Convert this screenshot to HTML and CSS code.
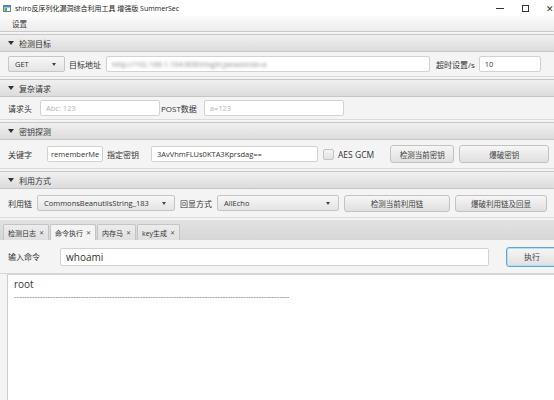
FILE: index.html
```html
<!DOCTYPE html>
<html lang="zh-CN">
<head>
    <meta charset="UTF-8">
    <title>shiro反序列化漏洞综合利用工具 增强版 SummerSec</title>
    <link rel="stylesheet" href="styles.css">
</head>
<body>

    <div class="titlebar">
        <svg class="app-icon" width="8" height="7" viewBox="0 0 8 7">
            <rect x="0.5" y="0.5" width="7" height="6" fill="#fff" stroke="#6b7d8f"/>
            <rect x="1" y="1" width="6" height="1.5" fill="#3a8fd0"/>
            <rect x="1.5" y="3" width="2.5" height="3" fill="#4caf50"/>
        </svg>
        <span class="title">shiro反序列化漏洞综合利用工具 增强版 SummerSec</span>
        <div class="win-controls">
            <span class="ctl-min"></span>
            <span class="ctl-max"></span>
            <span class="ctl-close">✕</span>
        </div>
    </div>

    <div class="menubar"><span>设置</span></div>

    <div class="pane">
        <div class="pane-head"><span class="arrow"></span>检测目标</div>
        <div class="pane-body row-target">
            <div class="combo combo-method">GET<span class="caret"></span></div>
            <label class="lbl lbl-url">目标地址</label>
            <div class="field field-url"><span class="redacted">http://192.168.1.104:8080/login;jsessionid=a</span></div>
            <label class="lbl lbl-timeout">超时设置/s</label>
            <input class="field field-timeout" value="10">
        </div>
    </div>

    <div class="pane">
        <div class="pane-head"><span class="arrow"></span>复杂请求</div>
        <div class="pane-body row-request">
            <label class="lbl">请求头</label>
            <input class="field field-header" placeholder="Abc: 123">
            <label class="lbl lbl-post">POST数据</label>
            <input class="field field-post" placeholder="a=123">
        </div>
    </div>

    <div class="pane">
        <div class="pane-head"><span class="arrow"></span>密钥探测</div>
        <div class="pane-body row-key">
            <label class="lbl">关键字</label>
            <input class="field field-keyword" value="rememberMe">
            <label class="lbl lbl-key">指定密钥</label>
            <input class="field field-key" value="3AvVhmFLUs0KTA3Kprsdag==">
            <span class="checkbox"></span>
            <span class="check-text">AES GCM</span>
            <button class="btn btn-check-key">检测当前密钥</button>
            <button class="btn btn-brute-key">爆破密钥</button>
        </div>
    </div>

    <div class="pane">
        <div class="pane-head"><span class="arrow"></span>利用方式</div>
        <div class="pane-body row-gadget">
            <label class="lbl">利用链</label>
            <div class="combo combo-gadget">CommonsBeanutilsString_183<span class="caret"></span></div>
            <label class="lbl lbl-echo">回显方式</label>
            <div class="combo combo-echo">AllEcho<span class="caret"></span></div>
            <button class="btn btn-check-gadget">检测当前利用链</button>
            <button class="btn btn-brute-gadget">爆破利用链及回显</button>
        </div>
    </div>

    <div class="tabbar">
        <div class="tab">检测日志<span class="tab-x">✕</span></div>
        <div class="tab active">命令执行<span class="tab-x">✕</span></div>
        <div class="tab">内存马<span class="tab-x">✕</span></div>
        <div class="tab">key生成<span class="tab-x">✕</span></div>
    </div>

    <div class="cmd-row">
        <label class="lbl">输入命令</label>
        <input class="field field-cmd" value="whoami">
        <button class="btn btn-exec">执行</button>
    </div>

    <div class="output">
        <div class="out-line">root</div>
        <div class="out-line sep">-----------------------------------------------------------------------------------------------------------</div>
    </div>

</body>
</html>
```

FILE: styles.css
```css
* {
    margin: 0;
    padding: 0;
    box-sizing: border-box;
}

body {
    font-family: "Open Sans", "Noto Sans CJK SC", sans-serif;
    font-size: 8px;
    color: #333;
    background-color: #f4f4f4;
    width: 554px;
    height: 400px;
    overflow: hidden;
}

/* window chrome */
.titlebar {
    height: 16px;
    background-color: #fff;
    display: flex;
    align-items: center;
    padding-left: 3px;
}

.app-icon {
    margin-right: 4px;
}

.title {
    font-size: 7px;
    color: #222;
}

.win-controls {
    margin-left: auto;
    display: flex;
    align-items: center;
    height: 16px;
}

.ctl-min {
    width: 8px;
    height: 1px;
    background-color: #333;
    margin-right: 18px;
}

.ctl-max {
    width: 7px;
    height: 7px;
    border: 1px solid #333;
    margin-right: 17px;
}

.ctl-close {
    font-size: 9px;
    width: 8px;
    overflow: hidden;
    color: #333;
}

.menubar {
    height: 16px;
    background: linear-gradient(#fbfbfb, #ececec);
    border-bottom: 1px solid #c9c9c9;
    display: flex;
    align-items: center;
    padding-left: 12px;
    font-size: 7.5px;
}

/* titled panes */
.pane {
    margin-top: 2px;
    border-bottom: 1px solid #dadada;
}

.pane-head {
    height: 18px;
    background: linear-gradient(#f0f0f0, #dcdcdc);
    border-top: 1px solid #c6c6c6;
    border-bottom: 1px solid #c6c6c6;
    display: flex;
    align-items: center;
    padding-left: 8px;
    color: #333;
}

.arrow {
    width: 0;
    height: 0;
    border-left: 3px solid transparent;
    border-right: 3px solid transparent;
    border-top: 4px solid #333;
    margin-right: 5px;
}

.pane-body {
    display: flex;
    align-items: center;
    padding: 0 6px 0 8px;
    overflow: hidden;
}

.pane-body > *,
.cmd-row > * {
    flex-shrink: 0;
    white-space: nowrap;
}

.row-target {
    height: 24px;
}

.row-request {
    height: 22px;
}

.row-key {
    height: 28px;
}

.row-gadget {
    height: 28px;
}

/* inputs */
.field {
    height: 16px;
    background-color: #fff;
    border: 1px solid #d2d2d2;
    border-radius: 2px;
    font-family: "Open Sans", "Noto Sans CJK SC", sans-serif;
    font-size: 7.5px;
    color: #333;
    padding: 0 5px;
    outline: none;
    display: flex;
    align-items: center;
}

.field::placeholder {
    color: #b4b4b4;
}

.lbl-url {
    margin-left: 4px;
}

.field-url {
    width: 324px;
    margin-left: 5px;
    overflow: hidden;
}

.redacted {
    color: #8a8a8a;
    filter: blur(1.4px);
    white-space: nowrap;
}

.lbl-timeout {
    margin-left: 6px;
}

.field-timeout {
    width: 62px;
    margin-left: 4px;
}

.field-header {
    width: 120px;
    margin-left: 8px;
}

.lbl-post {
    margin-left: 1px;
}

.field-post {
    width: 140px;
    margin-left: 7px;
}

.field-keyword {
    width: 56px;
    margin-left: 15px;
    padding: 0 3px;
    font-size: 7.5px;
}

.lbl-key {
    margin-left: 4px;
}

.field-key {
    width: 167px;
    margin-left: 12px;
}

.checkbox {
    width: 11px;
    height: 11px;
    border: 1px solid #c4c4c4;
    border-radius: 2px;
    background: linear-gradient(#f4f4f4, #e2e2e2);
    margin-left: 5px;
}

.check-text {
    margin-left: 4px;
    font-size: 8.5px;
    color: #333;
}

/* combo boxes */
.combo {
    height: 16px;
    border: 1px solid #c6c6c6;
    border-radius: 2px;
    background: linear-gradient(#f7f7f7, #e4e4e4);
    display: flex;
    align-items: center;
    padding-left: 6px;
    font-size: 7.5px;
    color: #333;
    position: relative;
}

.caret {
    position: absolute;
    right: 8px;
    top: 6px;
    width: 0;
    height: 0;
    border-left: 2.5px solid transparent;
    border-right: 2.5px solid transparent;
    border-top: 3px solid #444;
}

.combo-method {
    width: 57px;
}

.combo-gadget {
    width: 138px;
    margin-left: 5px;
}

.lbl-echo {
    margin-left: 5px;
}

.combo-echo {
    width: 122px;
    margin-left: 5px;
}

/* buttons */
.btn {
    height: 18px;
    border: 1px solid #c2c2c2;
    border-radius: 3px;
    background: linear-gradient(#f6f6f6, #e0e0e0);
    font-family: "Open Sans", "Noto Sans CJK SC", sans-serif;
    font-size: 7.5px;
    color: #444;
}

.btn-check-key {
    width: 64px;
    margin-left: 16px;
}

.btn-brute-key {
    width: 90px;
    margin-left: 5px;
}

.btn-check-gadget {
    width: 106px;
    height: 17px;
    margin-left: 5px;
}

.btn-brute-gadget {
    width: 92px;
    height: 17px;
    margin-left: 5px;
}

/* tabs */
.tabbar {
    margin-top: 2px;
    height: 20px;
    background: linear-gradient(#e2e2e2, #d6d6d6);
    display: flex;
    align-items: flex-end;
    padding-left: 3px;
    gap: 1px;
}

.tab {
    height: 16px;
    border: 1px solid #c4c4c4;
    border-bottom: none;
    border-radius: 2px 2px 0 0;
    background: linear-gradient(#ececec, #e0e0e0);
    display: flex;
    align-items: center;
    padding: 0 4px;
    font-size: 7px;
    color: #333;
}

.tab.active {
    background: #f4f4f4;
}

.tab-x {
    font-size: 6px;
    margin-left: 3px;
    color: #555;
}

/* command input */
.cmd-row {
    height: 34px;
    display: flex;
    align-items: center;
    padding-left: 8px;
    border-bottom: 1px solid #d6d6d6;
}

.field-cmd {
    width: 429px;
    height: 18px;
    margin-left: 20px;
    font-size: 10px;
    padding-left: 5px;
}

.btn-exec {
    width: 52px;
    height: 20px;
    margin-left: 17px;
    border: 1px solid #5aa9d8;
    box-shadow: inset 0 0 0 1px #b8dcf2;
    font-size: 8px;
}

/* output area */
.output {
    margin-left: 7px;
    height: 127px;
    background-color: #fff;
    border-left: 1px solid #cdcdcd;
    border-top: 1px solid #d6d6d6;
    padding: 2px 6px;
}

.out-line {
    font-size: 10px;
    line-height: 14px;
    color: #333;
}

.sep {
    font-size: 8px;
    line-height: 10px;
    color: #666;
    white-space: nowrap;
}
```
